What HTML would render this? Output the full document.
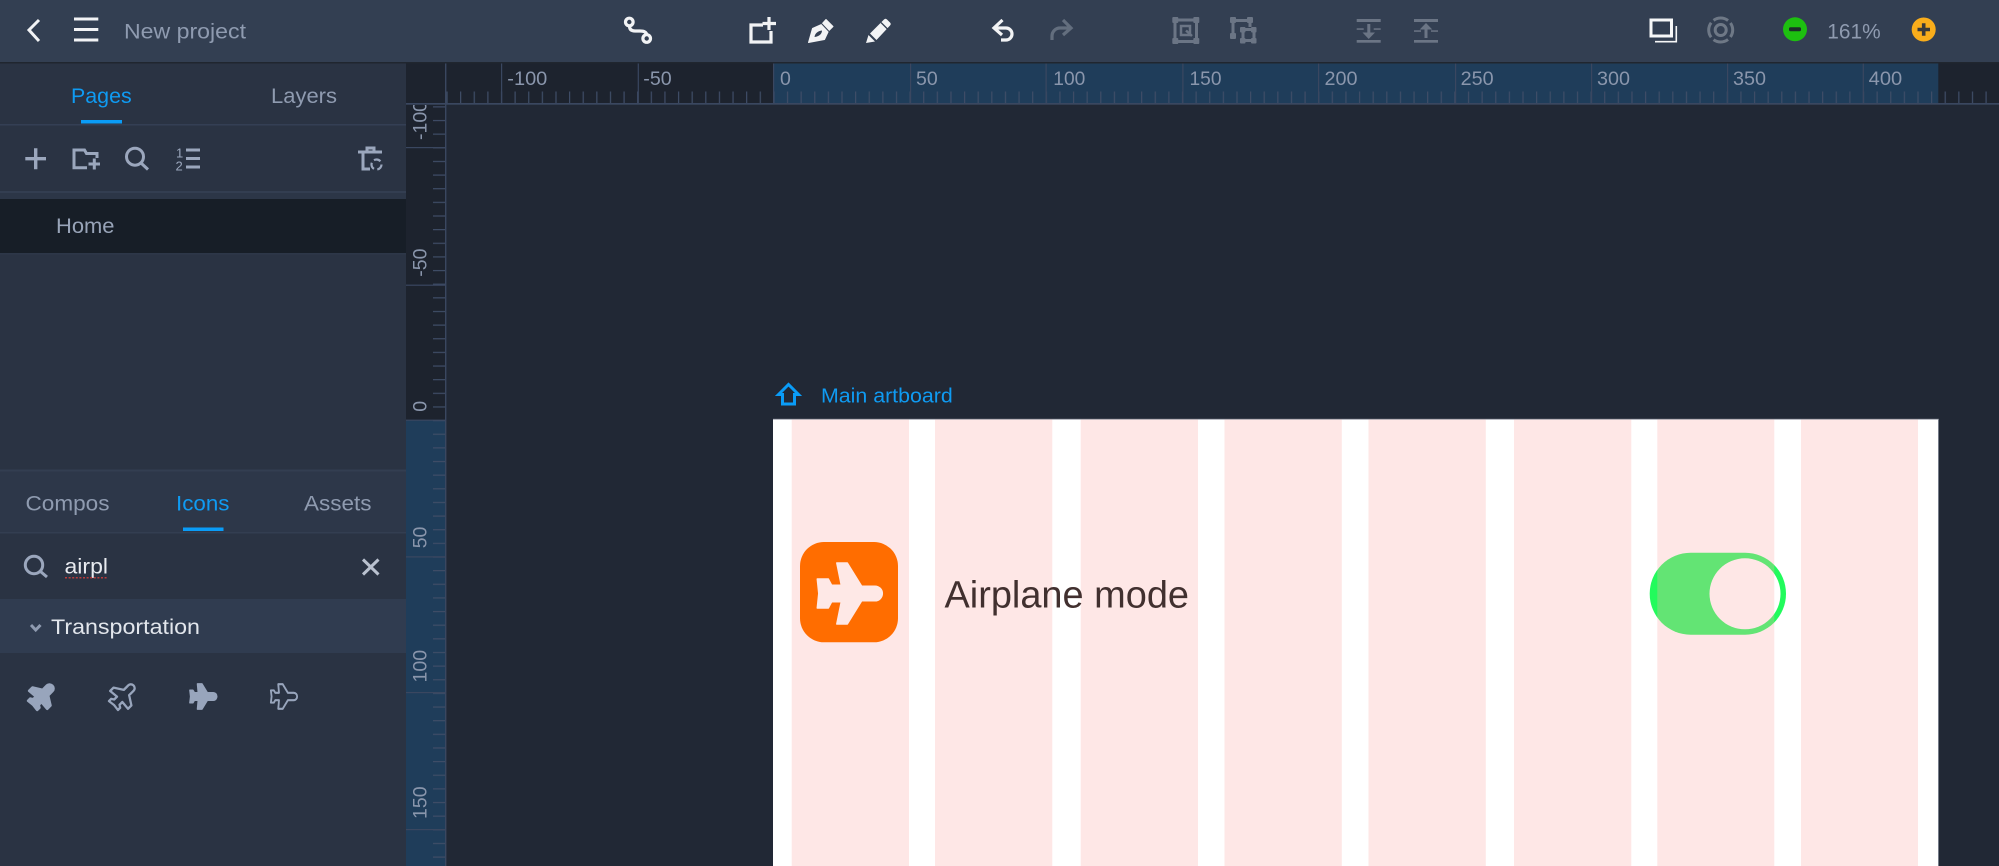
<!DOCTYPE html>
<html><head><meta charset="utf-8"><title>New project</title>
<style>
html,body{margin:0;padding:0;background:#212835;width:1999px;height:866px;overflow:hidden}
svg{display:block}
text{font-family:"Liberation Sans",sans-serif}
</style></head><body>
<svg xmlns="http://www.w3.org/2000/svg" width="1999" height="866" viewBox="0 0 1999 866">
<defs>
<pattern id="hx" x="773.3" y="0" width="13.62" height="20" patternUnits="userSpaceOnUse"><rect x="0" y="0" width="1.2" height="20" fill="#3f4d67"/></pattern>
<pattern id="vy" x="0" y="420" width="20" height="13.64" patternUnits="userSpaceOnUse"><rect x="0" y="0" width="20" height="1.2" fill="#3f4d67"/></pattern>
<clipPath id="vc"><rect x="406" y="105" width="40" height="761"/></clipPath>
<path id="pl" d="M25.7 -7.3A7.3 7.3 0 0 1 25.7 7.3H12.3L-2 30.5H-12.5L-8 8.3H-17.7L-21 14.5H-32L-30.5 0L-32 -14.5H-21L-17.7 -8.3H-8L-12.5 -30.5H-2L12.3 -7.3Z"/>
<path id="p2" d="M15 -4.5A4.5 4.5 0 0 1 15 4.5H7L0 15H-6L-5 4.5H-10L-12 7.5H-16L-15 0L-16 -7.5H-12L-10 -4.5H-5L-6 -15H0L7 -4.5Z"/>
</defs>

<rect width="1999" height="866" fill="#212835"/>

<!-- header -->
<rect width="1999" height="62" fill="#333f52"/>
<rect y="62" width="1999" height="1.5" fill="#20262f"/>

<!-- left panel -->
<rect y="63.5" width="406" height="803" fill="#2a3343"/>
<rect y="124" width="406" height="1.5" fill="#343f54"/>
<rect y="191" width="406" height="2" fill="#333e51"/>
<rect y="193" width="406" height="6" fill="#2c3647"/>
<rect y="199" width="406" height="54" fill="#171e27"/>
<rect y="253" width="406" height="1.5" fill="#2d3748"/>
<rect y="470" width="406" height="62" fill="#2d3749"/>
<rect y="469.5" width="406" height="2" fill="#333e51"/>
<rect y="532" width="406" height="1.5" fill="#333e51"/>
<rect y="599" width="406" height="54" fill="#303c50"/>

<!-- rulers -->
<rect x="406" y="63.5" width="1593" height="41" fill="#1d232e"/>
<rect x="406" y="104" width="40" height="762" fill="#1d232e"/>
<rect x="773.3" y="63.5" width="1165" height="41" fill="#1f3d5a"/>
<rect x="406" y="420" width="40" height="446" fill="#1f3d5a"/>
<rect x="446" y="91.5" width="1553" height="12" fill="url(#hx)"/>
<rect x="433" y="105" width="13" height="761" fill="url(#vy)"/>
<rect x="406" y="103" width="1593" height="1.7" fill="#3a4760"/>
<rect x="445" y="63.5" width="1.4" height="803" fill="#3a4760"/>
<g fill="#3a4760">
<rect x="501" y="63.5" width="1.2" height="40"/><rect x="637.7" y="63.5" width="1.2" height="40"/><rect x="773" y="63.5" width="1.2" height="40"/><rect x="910" y="63.5" width="1.2" height="40"/><rect x="1045.5" y="63.5" width="1.2" height="40"/><rect x="1182.3" y="63.5" width="1.2" height="40"/><rect x="1318" y="63.5" width="1.2" height="40"/><rect x="1455" y="63.5" width="1.2" height="40"/><rect x="1591" y="63.5" width="1.2" height="40"/><rect x="1727" y="63.5" width="1.2" height="40"/><rect x="1862.7" y="63.5" width="1.2" height="40"/>
<rect x="406" y="147" width="40" height="1.2"/><rect x="406" y="284.6" width="40" height="1.2"/><rect x="406" y="419.6" width="40" height="1.2"/><rect x="406" y="556.3" width="40" height="1.2"/><rect x="406" y="692" width="40" height="1.2"/><rect x="406" y="829" width="40" height="1.2"/>
</g>
<g font-size="19.5" fill="#8a96ac">
<text x="507.3" y="85" textLength="40" lengthAdjust="spacingAndGlyphs">-100</text>
<text x="643.3" y="85" textLength="28.4" lengthAdjust="spacingAndGlyphs">-50</text>
<text x="780" y="85">0</text>
<text x="916" y="85" textLength="21.7" lengthAdjust="spacingAndGlyphs">50</text>
<text x="1053.3" y="85" textLength="32" lengthAdjust="spacingAndGlyphs">100</text>
<text x="1189.5" y="85" textLength="32" lengthAdjust="spacingAndGlyphs">150</text>
<text x="1324.5" y="85" textLength="33" lengthAdjust="spacingAndGlyphs">200</text>
<text x="1460.7" y="85" textLength="33" lengthAdjust="spacingAndGlyphs">250</text>
<text x="1597" y="85" textLength="33" lengthAdjust="spacingAndGlyphs">300</text>
<text x="1733" y="85" textLength="33" lengthAdjust="spacingAndGlyphs">350</text>
<text x="1868.7" y="85" textLength="33.5" lengthAdjust="spacingAndGlyphs">400</text>
</g>
<g font-size="19.5" fill="#8a96ac" clip-path="url(#vc)">
<text transform="translate(426.7,140) rotate(-90)">-100</text>
<text transform="translate(426.7,276.7) rotate(-90)">-50</text>
<text transform="translate(426.7,411.7) rotate(-90)">0</text>
<text transform="translate(426.7,548.3) rotate(-90)">50</text>
<text transform="translate(426.7,682.5) rotate(-90)">100</text>
<text transform="translate(426.7,819) rotate(-90)">150</text>
</g>

<!-- header left -->
<path d="M39 20L29 30L39 41" fill="none" stroke="#f2f3f5" stroke-width="3"/>
<g fill="#f2f3f5"><rect x="74" y="17.5" width="24.3" height="3"/><rect x="74" y="28" width="24.3" height="3"/><rect x="74" y="38.5" width="24.3" height="3"/></g>
<text x="124" y="38.3" font-size="21" fill="#8f9bb0" textLength="122" lengthAdjust="spacingAndGlyphs">New project</text>

<!-- header center icons -->
<g fill="none" stroke="#f2f3f5" stroke-width="3.2">
<circle cx="629.3" cy="22" r="3.8"/><circle cx="646.7" cy="38.5" r="3.8"/>
<path d="M629.5 26Q629.5 31 635 31L640 31Q646 31 646.7 34.5"/>
<path d="M763 25H751V42H771V31"/><path d="M769 17V30M762.5 23.5H776"/>
<path d="M993.5 28H1006a6 6 0 0 1 0 12H1001M1002.5 20L994 28L1002 35"/>
</g>
<path d="M1063 20L1071 28L1063 35M1071 28H1060a8 8 0 0 0 -8 8v4" fill="none" stroke="#636e7e" stroke-width="3.2"/>
<!-- pen -->
<path d="M808.5 42.5L812.5 28.5L821.5 24.5L826 19.5L833 26.5L828.5 31L824.5 39.5Z" fill="#f2f3f5" stroke="#f2f3f5" stroke-linejoin="round"/>
<path d="M814.5 37C815 33 818 31 822 30.5C822 34 819 36.5 814.5 37Z" fill="#333f52"/>
<path d="M821.5 23.5L829.5 32" stroke="#333f52" stroke-width="1"/>
<!-- pencil -->
<path d="M866 43L868.5 35L875 41.5Z" fill="#f2f3f5"/>
<path d="M870 33.5L884 19.5Q885.5 18 887 19.5L890 22.5Q891.5 24 890 25.5L876.5 40Z" fill="#f2f3f5"/>
<path d="M881 22.5L887.5 29" stroke="#333f52" stroke-width="1.3"/>

<!-- disabled frame icons -->
<g fill="none" stroke="#6b7585" stroke-width="3">
<rect x="1175" y="20" width="21.5" height="21.5"/>
<rect x="1181" y="26" width="9" height="9" stroke-width="2.5"/>
<path d="M1186 30.5L1192 36" stroke-width="2.5"/>
<path d="M1233 20.5H1250V27M1233 20.5V38"/>
<rect x="1243" y="29.5" width="11" height="11"/>
</g>
<g fill="#6b7585">
<rect x="1172.3" y="17" width="6" height="6" rx="1"/><rect x="1193.3" y="17" width="6" height="6" rx="1"/><rect x="1172.3" y="38" width="6" height="6" rx="1"/><rect x="1193.3" y="38" width="6" height="6" rx="1"/>
<rect x="1230" y="17" width="6" height="6" rx="1"/><rect x="1247" y="17" width="6" height="6" rx="1"/><rect x="1230" y="33" width="6" height="6" rx="1"/>
<rect x="1240" y="27" width="5.5" height="5.5" rx="1"/><rect x="1251" y="27" width="5.5" height="5.5" rx="1"/><rect x="1240" y="38" width="5.5" height="5.5" rx="1"/><rect x="1251" y="38" width="5.5" height="5.5" rx="1"/>
<!-- align icons -->
<rect x="1356.7" y="19" width="24" height="3"/><rect x="1356.7" y="40" width="24" height="2.7"/>
<rect x="1356.7" y="28.3" width="7" height="1.5"/><rect x="1373.7" y="28.3" width="7" height="1.5"/>
<rect x="1367.3" y="24" width="3" height="9"/><path d="M1362.5 32.5H1375L1368.7 39Z"/>
<rect x="1414" y="19" width="24" height="3"/><rect x="1414" y="40" width="24" height="2.7"/>
<rect x="1414" y="30.3" width="7" height="1.5"/><rect x="1431" y="30.3" width="7" height="1.5"/>
<rect x="1424.5" y="29" width="3" height="9"/><path d="M1419.7 29.5H1432.3L1426 23Z"/>
</g>

<!-- header right -->
<rect x="1651" y="20" width="20.5" height="16" fill="none" stroke="#f6f7f8" stroke-width="3"/>
<path d="M1676.3 26V41.7H1655" fill="none" stroke="#f6f7f8" stroke-width="1.6"/>
<circle cx="1720.7" cy="30" r="5.5" fill="none" stroke="#6e7886" stroke-width="3"/>
<circle cx="1720.7" cy="30" r="12" fill="none" stroke="#6e7886" stroke-width="3" stroke-dasharray="15.5 3.35" stroke-dashoffset="8"/>
<circle cx="1795" cy="29.3" r="12" fill="#1dbf10"/><rect x="1789" y="27.3" width="12" height="4" rx="1.5" fill="#1c2e28"/>
<text x="1827.3" y="38.3" font-size="21" fill="#8f9bb0" textLength="53.4" lengthAdjust="spacingAndGlyphs">161%</text>
<circle cx="1923.7" cy="29.5" r="12" fill="#f9ad1b"/><path d="M1917.5 29.5H1930M1923.7 23.2V35.8" stroke="#3a3a3a" stroke-width="3.6"/>

<!-- tabs -->
<text x="71" y="103" font-size="21" fill="#0f9bf2" textLength="60.7" lengthAdjust="spacingAndGlyphs">Pages</text>
<text x="271" y="103" font-size="21" fill="#8f9bb0" textLength="66" lengthAdjust="spacingAndGlyphs">Layers</text>
<rect x="81" y="120" width="41" height="3.5" fill="#0a9cf7"/>

<!-- panel toolbar -->
<g fill="none" stroke="#9ba7bd" stroke-width="3">
<path d="M25.3 158.7H46M35.7 148.3V169.2" stroke-width="3.4"/>
<path d="M87 167.7H74V150H84.5L86.5 153.5H97V158"/>
<path d="M88.5 164H100M94.3 158.5V169.5" stroke-width="3"/>
<circle cx="135" cy="156.7" r="8.5"/><path d="M141 163L148 169.5"/>
<path d="M186 150H200M186 158.5H200M186 167H200"/>
<path d="M358 152H382M367 151V148H374V151"/>
<path d="M363 152V169H370" stroke-width="3"/>
<circle cx="376.5" cy="164.5" r="5" stroke-width="2.2" stroke-dasharray="7 3.4"/>
</g>
<text x="176" y="157.5" font-size="13" fill="#9ba7bd">1</text>
<text x="175.5" y="170.5" font-size="13" fill="#9ba7bd">2</text>

<text x="56" y="233" font-size="21" fill="#98a4b8" textLength="58.5" lengthAdjust="spacingAndGlyphs">Home</text>

<!-- lower tabs -->
<text x="25.5" y="510.5" font-size="21" fill="#8f9bb0" textLength="84" lengthAdjust="spacingAndGlyphs">Compos</text>
<text x="176" y="510.5" font-size="21" fill="#0f9bf2" textLength="53.5" lengthAdjust="spacingAndGlyphs">Icons</text>
<text x="304" y="510.5" font-size="21" fill="#8f9bb0" textLength="67.5" lengthAdjust="spacingAndGlyphs">Assets</text>
<rect x="183" y="527.5" width="40.5" height="3.5" fill="#0a9cf7"/>

<!-- search -->
<circle cx="34" cy="565" r="8.7" fill="none" stroke="#9ba7bd" stroke-width="3"/>
<path d="M40.5 571.5L47 577" fill="none" stroke="#9ba7bd" stroke-width="3"/>
<text x="64.5" y="573.3" font-size="21" fill="#e8ebf0" textLength="43.5" lengthAdjust="spacingAndGlyphs">airpl</text>
<path d="M65 577.7H108" stroke="#b83c3c" stroke-width="1.5" stroke-dasharray="2 1.6"/>
<path d="M363 559.5L378.5 574.5M378.5 559.5L363 574.5" stroke="#b9c1cf" stroke-width="3" fill="none"/>

<!-- transportation -->
<path d="M31 625L35.7 630L40.5 625" fill="none" stroke="#8f9bb0" stroke-width="3"/>
<text x="51" y="634" font-size="21.5" fill="#e2e6ec" textLength="149" lengthAdjust="spacingAndGlyphs">Transportation</text>

<!-- plane icons -->
<g transform="translate(41.5,696.5) rotate(-45) scale(.78,.84)"><use href="#p2" fill="#98a5bc" stroke="#98a5bc" stroke-width="3.4" stroke-linejoin="round"/></g>
<g transform="translate(122.5,696.5) rotate(-45) scale(.8,.84)"><use href="#p2" fill="none" stroke="#98a5bc" stroke-width="2.8" stroke-linejoin="round"/></g>
<g transform="translate(202,696.5) scale(.76,.84)"><use href="#p2" fill="#98a5bc" stroke="#98a5bc" stroke-width="1.8" stroke-linejoin="round"/></g>
<g transform="translate(282.7,696.5) scale(.74,.82)"><use href="#p2" fill="none" stroke="#98a5bc" stroke-width="2.5" stroke-linejoin="round"/></g>

<!-- artboard header -->
<path d="M778.5 394.5L788.5 384.5L798.5 394.5H794.5V404H782.5V394.5Z" fill="none" stroke="#0a9cf7" stroke-width="3"/>
<text x="821" y="402.3" font-size="20" fill="#0f9bf2" textLength="131.7" lengthAdjust="spacingAndGlyphs">Main artboard</text>

<!-- artboard -->
<rect x="773" y="419" width="1165.3" height="447" fill="#ffffff"/>
<rect x="773" y="418.8" width="1165.8" height=".8" fill="#8a909c"/>
<rect x="1938" y="419" width=".8" height="447" fill="#8a909c"/>

<!-- toggle below the grid -->
<rect x="1649.7" y="552.7" width="136.3" height="82" rx="41" fill="#22fb5c"/>
<circle cx="1745" cy="593.8" r="35.5" fill="#ffffff"/>

<!-- layout grid -->
<g fill="#fdb1ad" fill-opacity=".3">
<rect x="791.7" y="419.5" width="117.3" height="447"/>
<rect x="935" y="419.5" width="117.3" height="447"/>
<rect x="1080.7" y="419.5" width="117.3" height="447"/>
<rect x="1224.5" y="419.5" width="117.3" height="447"/>
<rect x="1368.5" y="419.5" width="117.3" height="447"/>
<rect x="1514" y="419.5" width="117.3" height="447"/>
<rect x="1657.3" y="419.5" width="117" height="447"/>
<rect x="1801" y="419.5" width="117" height="447"/>
</g>

<!-- app icon -->
<rect x="800" y="542" width="98" height="100.3" rx="24" fill="#ff6d00"/>
<g transform="translate(849.3,593.5)"><use href="#pl" fill="#fee8e6" stroke="#fee8e6" stroke-width="1.5" stroke-linejoin="round"/></g>
<text x="944.5" y="607.5" font-size="37.8" fill="#41302f" textLength="244.5" lengthAdjust="spacingAndGlyphs">Airplane mode</text>
</svg>
</body></html>
